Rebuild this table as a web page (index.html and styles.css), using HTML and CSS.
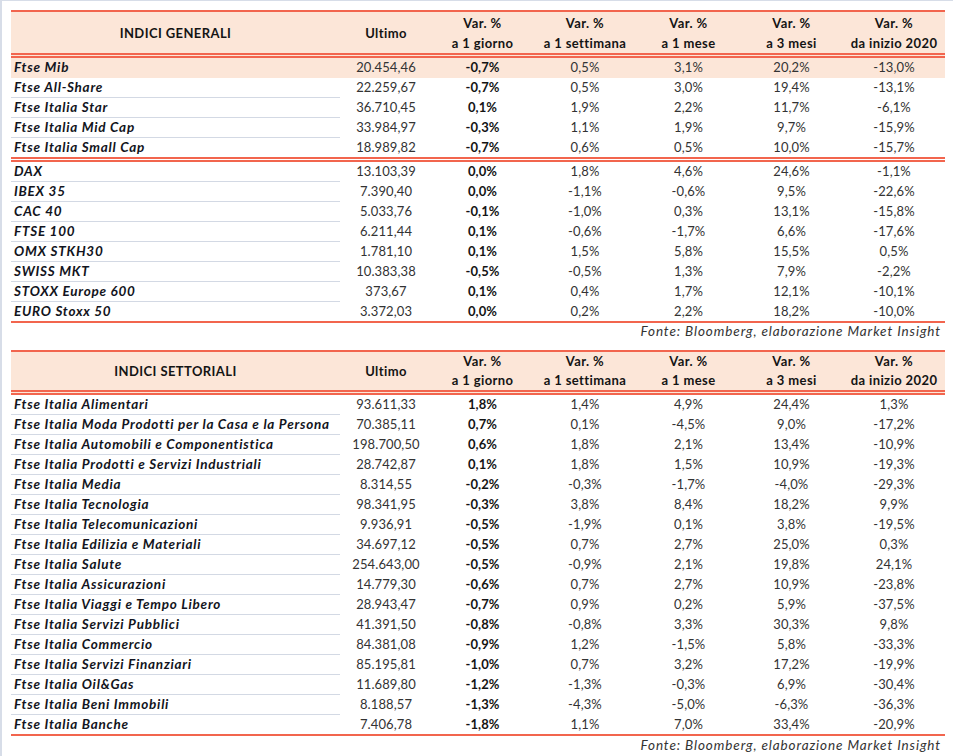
FILE: index.html
```html
<!DOCTYPE html>
<html lang="it">
<head>
<meta charset="utf-8">
<title>Indici</title>
<link rel="stylesheet" href="styles.css">
</head>
<body>
<div class="page">
  <table class="tbl tbl-gen">
    <colgroup>
      <col class="c-name"><col class="c-last"><col class="c-d1"><col class="c-w1"><col class="c-m1"><col class="c-m3"><col class="c-ytd">
    </colgroup>
    <thead>
      <tr>
        <th>INDICI GENERALI</th>
        <th>Ultimo</th>
        <th>Var. %<br>a 1 giorno</th>
        <th>Var. %<br>a 1 settimana</th>
        <th>Var. %<br>a 1 mese</th>
        <th>Var. %<br>a 3 mesi</th>
        <th>Var. %<br>da inizio 2020</th>
      </tr>
    </thead>
    <tbody>
      <tr class="hl"><td class="name nosep">Ftse Mib</td><td>20.454,46</td><td class="b">-0,7%</td><td>0,5%</td><td>3,1%</td><td>20,2%</td><td>-13,0%</td></tr>
      <tr><td class="name">Ftse All-Share</td><td>22.259,67</td><td class="b">-0,7%</td><td>0,5%</td><td>3,0%</td><td>19,4%</td><td>-13,1%</td></tr>
      <tr><td class="name">Ftse Italia Star</td><td>36.710,45</td><td class="b">0,1%</td><td>1,9%</td><td>2,2%</td><td>11,7%</td><td>-6,1%</td></tr>
      <tr><td class="name">Ftse Italia Mid Cap</td><td>33.984,97</td><td class="b">-0,3%</td><td>1,1%</td><td>1,9%</td><td>9,7%</td><td>-15,9%</td></tr>
      <tr class="grp-end"><td class="name">Ftse Italia Small Cap</td><td>18.989,82</td><td class="b">-0,7%</td><td>0,6%</td><td>0,5%</td><td>10,0%</td><td>-15,7%</td></tr>
      <tr><td class="name">DAX</td><td>13.103,39</td><td class="b">0,0%</td><td>1,8%</td><td>4,6%</td><td>24,6%</td><td>-1,1%</td></tr>
      <tr><td class="name">IBEX 35</td><td>7.390,40</td><td class="b">0,0%</td><td>-1,1%</td><td>-0,6%</td><td>9,5%</td><td>-22,6%</td></tr>
      <tr><td class="name">CAC 40</td><td>5.033,76</td><td class="b">-0,1%</td><td>-1,0%</td><td>0,3%</td><td>13,1%</td><td>-15,8%</td></tr>
      <tr><td class="name">FTSE 100</td><td>6.211,44</td><td class="b">0,1%</td><td>-0,6%</td><td>-1,7%</td><td>6,6%</td><td>-17,6%</td></tr>
      <tr><td class="name">OMX STKH30</td><td>1.781,10</td><td class="b">0,1%</td><td>1,5%</td><td>5,8%</td><td>15,5%</td><td>0,5%</td></tr>
      <tr><td class="name">SWISS MKT</td><td>10.383,38</td><td class="b">-0,5%</td><td>-0,5%</td><td>1,3%</td><td>7,9%</td><td>-2,2%</td></tr>
      <tr><td class="name">STOXX Europe 600</td><td>373,67</td><td class="b">0,1%</td><td>0,4%</td><td>1,7%</td><td>12,1%</td><td>-10,1%</td></tr>
      <tr class="last"><td class="name">EURO Stoxx 50</td><td>3.372,03</td><td class="b">0,0%</td><td>0,2%</td><td>2,2%</td><td>18,2%</td><td>-10,0%</td></tr>
    </tbody>
  </table>
  <p class="source source-1">Fonte: Bloomberg, elaborazione Market Insight</p>

  <table class="tbl tbl-sect">
    <colgroup>
      <col class="c-name"><col class="c-last"><col class="c-d1"><col class="c-w1"><col class="c-m1"><col class="c-m3"><col class="c-ytd">
    </colgroup>
    <thead>
      <tr>
        <th>INDICI SETTORIALI</th>
        <th>Ultimo</th>
        <th>Var. %<br>a 1 giorno</th>
        <th>Var. %<br>a 1 settimana</th>
        <th>Var. %<br>a 1 mese</th>
        <th>Var. %<br>a 3 mesi</th>
        <th>Var. %<br>da inizio 2020</th>
      </tr>
    </thead>
    <tbody>
      <tr><td class="name">Ftse Italia Alimentari</td><td>93.611,33</td><td class="b">1,8%</td><td>1,4%</td><td>4,9%</td><td>24,4%</td><td>1,3%</td></tr>
      <tr><td class="name">Ftse Italia Moda Prodotti per la Casa e la Persona</td><td>70.385,11</td><td class="b">0,7%</td><td>0,1%</td><td>-4,5%</td><td>9,0%</td><td>-17,2%</td></tr>
      <tr><td class="name">Ftse Italia Automobili e Componentistica</td><td>198.700,50</td><td class="b">0,6%</td><td>1,8%</td><td>2,1%</td><td>13,4%</td><td>-10,9%</td></tr>
      <tr><td class="name">Ftse Italia Prodotti e Servizi Industriali</td><td>28.742,87</td><td class="b">0,1%</td><td>1,8%</td><td>1,5%</td><td>10,9%</td><td>-19,3%</td></tr>
      <tr><td class="name">Ftse Italia Media</td><td>8.314,55</td><td class="b">-0,2%</td><td>-0,3%</td><td>-1,7%</td><td>-4,0%</td><td>-29,3%</td></tr>
      <tr><td class="name">Ftse Italia Tecnologia</td><td>98.341,95</td><td class="b">-0,3%</td><td>3,8%</td><td>8,4%</td><td>18,2%</td><td>9,9%</td></tr>
      <tr><td class="name">Ftse Italia Telecomunicazioni</td><td>9.936,91</td><td class="b">-0,5%</td><td>-1,9%</td><td>0,1%</td><td>3,8%</td><td>-19,5%</td></tr>
      <tr><td class="name">Ftse Italia Edilizia e Materiali</td><td>34.697,12</td><td class="b">-0,5%</td><td>0,7%</td><td>2,7%</td><td>25,0%</td><td>0,3%</td></tr>
      <tr><td class="name">Ftse Italia Salute</td><td>254.643,00</td><td class="b">-0,5%</td><td>-0,9%</td><td>2,1%</td><td>19,8%</td><td>24,1%</td></tr>
      <tr><td class="name">Ftse Italia Assicurazioni</td><td>14.779,30</td><td class="b">-0,6%</td><td>0,7%</td><td>2,7%</td><td>10,9%</td><td>-23,8%</td></tr>
      <tr><td class="name">Ftse Italia Viaggi e Tempo Libero</td><td>28.943,47</td><td class="b">-0,7%</td><td>0,9%</td><td>0,2%</td><td>5,9%</td><td>-37,5%</td></tr>
      <tr><td class="name">Ftse Italia Servizi Pubblici</td><td>41.391,50</td><td class="b">-0,8%</td><td>-0,8%</td><td>3,3%</td><td>30,3%</td><td>9,8%</td></tr>
      <tr><td class="name">Ftse Italia Commercio</td><td>84.381,08</td><td class="b">-0,9%</td><td>1,2%</td><td>-1,5%</td><td>5,8%</td><td>-33,3%</td></tr>
      <tr><td class="name">Ftse Italia Servizi Finanziari</td><td>85.195,81</td><td class="b">-1,0%</td><td>0,7%</td><td>3,2%</td><td>17,2%</td><td>-19,9%</td></tr>
      <tr><td class="name">Ftse Italia Oil&amp;Gas</td><td>11.689,80</td><td class="b">-1,2%</td><td>-1,3%</td><td>-0,3%</td><td>6,9%</td><td>-30,4%</td></tr>
      <tr><td class="name">Ftse Italia Beni Immobili</td><td>8.188,57</td><td class="b">-1,3%</td><td>-4,3%</td><td>-5,0%</td><td>-6,3%</td><td>-36,3%</td></tr>
      <tr class="last"><td class="name">Ftse Italia Banche</td><td>7.406,78</td><td class="b">-1,8%</td><td>1,1%</td><td>7,0%</td><td>33,4%</td><td>-20,9%</td></tr>
    </tbody>
  </table>
  <p class="source source-2">Fonte: Bloomberg, elaborazione Market Insight</p>
</div>
</body>
</html>
```
FILE: styles.css
```css
html, body {
  margin: 0;
  padding: 0;
  background: #ffffff;
}

.page {
  box-sizing: border-box;
  min-height: 756px;
  border-left: 2px solid #d7dde8;
  border-top: 1px solid #d7dde8;
  padding: 9px 0 0 9px;
  font-family: "Lato", "DejaVu Sans", sans-serif;
  font-size: 13px;
  color: #333333;
}

.tbl {
  width: 934px;
  table-layout: fixed;
  border-collapse: separate;
  border-spacing: 0;
}

.c-name { width: 329px; }
.c-last { width: 92px; }
.c-d1 { width: 101px; }
.c-w1 { width: 104px; }
.c-m1 { width: 103px; }
.c-m3 { width: 103px; }
.c-ytd { width: 102px; }

.tbl th {
  background: #fce6d8;
  border-top: 2px solid #f2654e;
  border-bottom: 5px double #f2654e;
  padding: 0;
  font-weight: 700;
  font-size: 13px;
  line-height: 20px;
  color: #141414;
  text-align: center;
  vertical-align: middle;
  letter-spacing: 0.4px;
}

.tbl-gen th {
  padding-top: 1px;
}

.tbl-sect th {
  line-height: 19px;
}

.tbl td {
  padding: 0;
  line-height: 19px;
  border-bottom: 1px solid transparent;
  text-align: center;
  white-space: nowrap;
  vertical-align: middle;
  letter-spacing: 0.1px;
}

.tbl td.name {
  text-align: left;
  padding-left: 3px;
  font-weight: 700;
  font-style: italic;
  font-size: 13.5px;
  color: #121420;
  border-bottom-color: #d3d9e4;
  letter-spacing: 0.75px;
}

.tbl td.name.nosep {
  border-bottom-color: transparent;
}

.tbl td.b {
  font-weight: 700;
  color: #141414;
}

.tbl tr.hl td {
  background: #fce6d8;
}

.tbl tr.grp-end td,
.tbl tr.grp-end td.name {
  border-bottom: 5px double #f2654e;
}

.tbl tr.last td,
.tbl tr.last td.name {
  border-bottom: 2px solid #f2654e;
}

.source {
  margin: 0;
  width: 930px;
  text-align: right;
  font-style: italic;
  color: #333333;
  font-size: 13.5px;
  letter-spacing: 0.9px;
}

.source-1 {
  line-height: 16px;
  margin-bottom: 11px;
}

.source-2 {
  line-height: 18px;
}
```
